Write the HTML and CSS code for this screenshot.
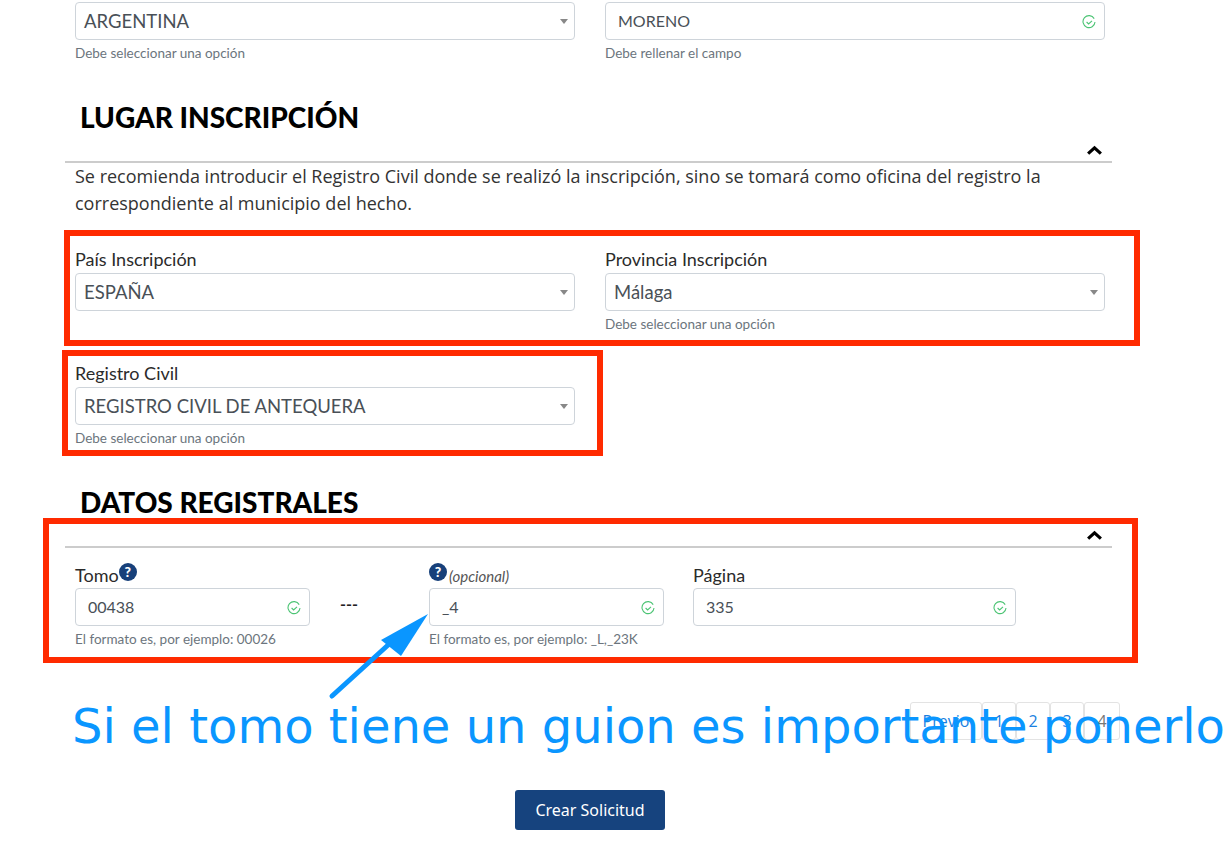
FILE: index.html
```html
<!DOCTYPE html>
<html lang="es">

<head>
    <meta charset="UTF-8">
    <meta name="viewport" content="width=device-width, initial-scale=1.0">
    <title>Crear Solicitud</title>
    <link rel="stylesheet" href="styles.css">
</head>

<body>
    <div class="page">
        <div class="row row-top">
            <div class="field">
                <div class="control select"><span class="value">ARGENTINA</span><i class="caret"></i></div>
                <div class="help">Debe seleccionar una opción</div>
            </div>
            <div class="field">
                <div class="control text"><span class="value">MORENO</span>
                    <svg class="ok" viewBox="0 0 14 14"><path d="M12.2 3.6A6 6 0 1 0 13 7"></path><path d="M4.6 7l2 2 3.4-3.2"></path></svg>
                </div>
                <div class="help">Debe rellenar el campo</div>
            </div>
        </div>

        <h2 class="title title-lugar">LUGAR INSCRIPCIÓN</h2>
        <div class="rule">
            <svg class="chevron" viewBox="0 0 16 10"><path d="M2 8l6-5.5L14 8"></path></svg>
        </div>
        <p class="intro">Se recomienda introducir el Registro Civil donde se realizó la inscripción, sino se tomará como oficina del registro la correspondiente al municipio del hecho.</p>

        <div class="row row-pais">
            <div class="field">
                <label class="label">País Inscripción</label>
                <div class="control select"><span class="value">ESPAÑA</span><i class="caret"></i></div>
            </div>
            <div class="field">
                <label class="label">Provincia Inscripción</label>
                <div class="control select"><span class="value">Málaga</span><i class="caret"></i></div>
                <div class="help">Debe seleccionar una opción</div>
            </div>
        </div>

        <div class="row row-registro">
            <div class="field">
                <label class="label">Registro Civil</label>
                <div class="control select"><span class="value">REGISTRO CIVIL DE ANTEQUERA</span><i class="caret"></i></div>
                <div class="help">Debe seleccionar una opción</div>
            </div>
        </div>

        <h2 class="title title-datos">DATOS REGISTRALES</h2>
        <div class="rule">
            <svg class="chevron" viewBox="0 0 16 10"><path d="M2 8l6-5.5L14 8"></path></svg>
        </div>

        <div class="row row-datos">
            <div class="field tomo">
                <label class="label">Tomo<span class="q">?</span></label>
                <div class="control text"><span class="value">00438</span>
                    <svg class="ok" viewBox="0 0 14 14"><path d="M12.2 3.6A6 6 0 1 0 13 7"></path><path d="M4.6 7l2 2 3.4-3.2"></path></svg>
                </div>
                <div class="help">El formato es, por ejemplo: 00026</div>
            </div>
            <div class="dash">---</div>
            <div class="field tomo">
                <label class="label"><span class="q q-first">?</span><em class="opt">(opcional)</em></label>
                <div class="control text"><span class="value">_4</span>
                    <svg class="ok" viewBox="0 0 14 14"><path d="M12.2 3.6A6 6 0 1 0 13 7"></path><path d="M4.6 7l2 2 3.4-3.2"></path></svg>
                </div>
                <div class="help">El formato es, por ejemplo: _L,_23K</div>
            </div>
            <div class="field pagina">
                <label class="label">Página</label>
                <div class="control text"><span class="value">335</span>
                    <svg class="ok" viewBox="0 0 14 14"><path d="M12.2 3.6A6 6 0 1 0 13 7"></path><path d="M4.6 7l2 2 3.4-3.2"></path></svg>
                </div>
            </div>
        </div>

        <div class="pager">
            <a class="pg pg-prev">Previo</a>
            <a class="pg">1</a>
            <a class="pg">2</a>
            <a class="pg">3</a>
            <a class="pg pg-last">4</a>
        </div>

        <div class="actions">
            <button class="btn">Crear Solicitud</button>
        </div>

        <!-- anotaciones encima del formulario -->
        <div class="mark mark1"></div>
        <div class="mark mark2"></div>
        <div class="mark mark3"></div>
        <svg class="arrow" viewBox="0 0 1230 862">
            <path class="arrow-line" d="M332 696L398 636"></path>
            <polygon class="arrow-head" points="428,614 381,640 401,656"></polygon>
        </svg>
        <div class="callout">Si el tomo tiene un guion es importante ponerlo</div>
    </div>
</body>

</html>
```

FILE: styles.css
```css
html,
body {
    margin: 0;
    padding: 0;
    background: #fff;
    overflow: hidden;
}

.page {
    position: relative;
    width: 1230px;
    height: 862px;
    box-sizing: border-box;
    padding: 2px 118px 0 65px;
    overflow: hidden;
    font-family: Lato, "Noto Sans", sans-serif;
    color: #212529;
}

.row {
    display: flex;
    gap: 30px;
    padding-left: 10px;
}

.field {
    width: 500px;
}

.label {
    display: block;
    height: 24px;
    margin-bottom: 2px;
    line-height: 24px;
    font-size: 18px;
    color: #2b2b2b;
    white-space: nowrap;
}

.control {
    position: relative;
    display: flex;
    align-items: center;
    box-sizing: border-box;
    height: 38px;
    border: 1px solid #ced4da;
    border-radius: 4px;
    background: #fff;
}

.value {
    padding: 0 0 2px 12px;
    font-size: 16px;
    color: #495057;
}

.select .value {
    padding: 0 0 0 8px;
    font-size: 18.5px;
}

.caret {
    position: absolute;
    right: 6px;
    top: 16px;
    width: 0;
    height: 0;
    border-left: 4px solid transparent;
    border-right: 4px solid transparent;
    border-top: 5px solid #888;
}

.ok {
    position: absolute;
    right: 8px;
    top: 12px;
    width: 14px;
    height: 14px;
    fill: none;
    stroke: #4cc474;
    stroke-width: 1.1;
}

.help {
    margin-top: 4px;
    height: 18px;
    line-height: 18px;
    font-size: 13.5px;
    color: #6c757d;
}

.title {
    margin: 0;
    padding-left: 15px;
    font-size: 28px;
    line-height: 34px;
    font-weight: 900;
    color: #000;
}

.title-lugar {
    margin-top: 38px;
}

.title-datos {
    margin-top: 38px;
}

.rule {
    position: relative;
    width: 1047px;
    height: 27px;
    border-bottom: 2px solid #ccc;
}

.chevron {
    position: absolute;
    right: 9px;
    top: 11px;
    width: 17px;
    height: 11px;
    fill: none;
    stroke: #000;
    stroke-width: 3;
}

.intro {
    margin: 0;
    padding: 0 60px 0 10px;
    font-family: "Open Sans", "Noto Sans", sans-serif;
    font-size: 18px;
    line-height: 27px;
    color: #333;
}

.row-pais {
    margin-top: 30px;
}

.row-registro {
    margin-top: 28px;
}

.row-datos {
    margin-top: 15px;
    gap: 0;
}

.row-datos .label {
    margin-bottom: 1px;
}

.tomo {
    width: 235px;
}

.pagina {
    width: 323px;
    margin-left: 29px;
}

.dash {
    width: 119px;
    padding: 31px 0 0 30px;
    box-sizing: border-box;
    font-size: 16px;
    font-weight: 700;
    color: #222;
}

.q {
    display: inline-block;
    width: 18px;
    height: 18px;
    border-radius: 50%;
    background: #17407a;
    color: #fff;
    font-size: 14px;
    font-weight: 900;
    line-height: 18px;
    text-align: center;
    vertical-align: 5px;
}

.opt {
    margin-left: 2px;
    font-size: 15px;
    color: #555;
}

.pager {
    display: flex;
    justify-content: flex-end;
    height: 38px;
    margin-top: 54px;
    margin-right: -8px;
}

.pg {
    display: block;
    box-sizing: border-box;
    width: 34px;
    height: 38px;
    border: 1px solid #e3e3e3;
    border-radius: 3px;
    font-family: "Open Sans", sans-serif;
    font-size: 16px;
    line-height: 36px;
    text-align: center;
    color: #1a7fe0;
}

.pg-prev {
    width: 72px;
}

.pg-last {
    width: 36px;
    color: #777;
}

.actions {
    display: flex;
    justify-content: center;
    margin-top: 50px;
    padding-left: 3px;
}

.btn {
    width: 150px;
    height: 40px;
    border: 0;
    border-radius: 3px;
    background: #16437e;
    color: #fff;
    font-family: "Noto Sans", "Open Sans", sans-serif;
    font-size: 16px;
}

.mark {
    position: absolute;
    box-sizing: border-box;
    border: 6px solid #ff2a00;
}

.mark1 {
    left: 64px;
    top: 230px;
    width: 1076px;
    height: 116px;
}

.mark2 {
    left: 62px;
    top: 350px;
    width: 541px;
    height: 106px;
}

.mark3 {
    left: 43px;
    top: 518px;
    width: 1095px;
    height: 145px;
}

.arrow {
    position: absolute;
    left: 0;
    top: 0;
    width: 1230px;
    height: 862px;
}

.arrow-line {
    fill: none;
    stroke: #0a96ff;
    stroke-width: 5;
    stroke-linecap: round;
}

.arrow-head {
    fill: #0a96ff;
}

.callout {
    position: absolute;
    left: 72px;
    top: 692px;
    font-family: "DejaVu Sans", sans-serif;
    font-size: 48px;
    line-height: 68px;
    color: #0a96ff;
    white-space: nowrap;
}
```
